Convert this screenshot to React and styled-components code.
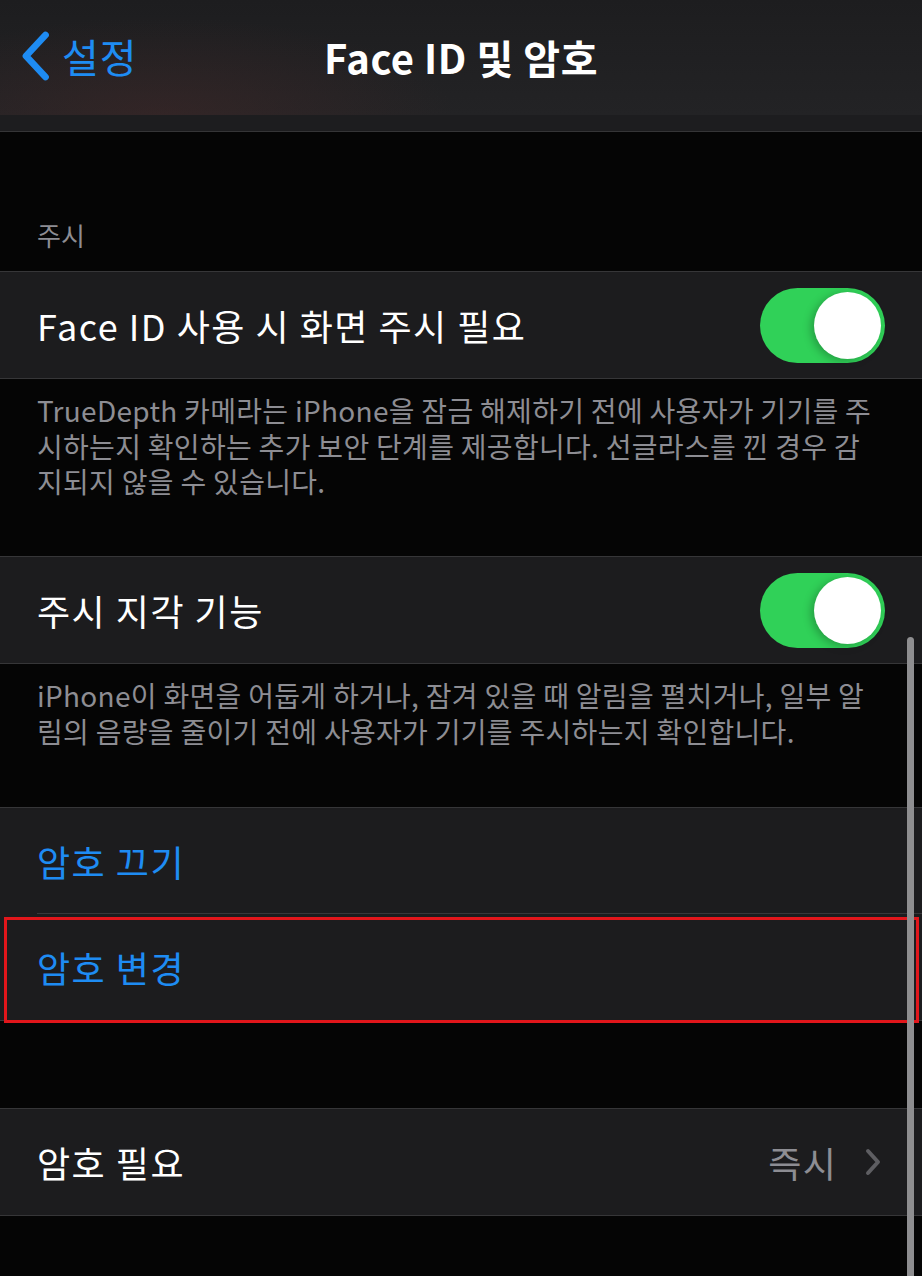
import React from "react";
import styled, { createGlobalStyle } from "styled-components";

const Global = createGlobalStyle`
  html, body { margin: 0; padding: 0; background: #050505; }
  body { font-family: "Noto Sans CJK KR", "Noto Sans", sans-serif; }
`;

const Page = styled.div`
  position: relative;
  width: 922px;
  height: 1276px;
  overflow: hidden;
  background: #050505;
`;

const NavBar = styled.header`
  height: 115px;
  display: grid;
  grid-template-columns: 1fr auto 1fr;
  align-items: center;
  background:
    radial-gradient(ellipse 420px 140px at 160px 115px, rgba(70, 40, 40, 0.45), rgba(0,0,0,0) 70%),
    linear-gradient(#1d1d1f, #232325);
`;

const Back = styled.div`
  display: flex;
  align-items: center;
  gap: 12px;
  padding-left: 20px;
  color: #1e8cf3;
  font-size: 40px;
  line-height: 1;
  letter-spacing: 1px;
  padding-bottom: 4px;
`;

const Title = styled.h1`
  margin: 0;
  color: #ffffff;
  font-size: 40px;
  font-weight: 700;
  letter-spacing: 0.5px;
  padding-bottom: 2px;
`;

const Strip = styled.div`
  height: 16px;
  background: #1d1d1f;
  border-bottom: 1px solid #353537;
`;

const Spacer = styled.div`
  height: ${p => p.h}px;
`;

const SectionHeader = styled.div`
  height: ${p => p.h}px;
  display: flex;
  align-items: flex-end;
  padding: 0 0 18px 37px;
  box-sizing: border-box;
  color: #8d8d93;
  font-size: 26px;
`;

const Group = styled.section`
  background: #1c1c1e;
  border-top: 1px solid #363638;
  border-bottom: 1px solid #363638;
`;

const Row = styled.div`
  position: relative;
  height: 106px;
  display: flex;
  align-items: center;
  justify-content: space-between;
  padding: 0 37px;
  box-sizing: border-box;
  ${p => p.divider && `
    &::before {
      content: "";
      position: absolute;
      left: 37px; right: 0; top: -1px;
      height: 1px;
      background: #38383a;
    }
  `}
  ${p => p.highlight && `
    &::after {
      content: "";
      position: absolute;
      left: 4px; right: 3px; top: 3px; bottom: -3px;
      border: 3px solid #e1161b;
      pointer-events: none;
    }
  `}
`;

const Label = styled.span`
  font-size: 36px;
  color: ${p => (p.link ? "#1e8cf3" : "#ffffff")};
  letter-spacing: 1.5px;
`;

const Value = styled.span`
  display: flex;
  align-items: center;
  gap: 28px;
  color: #8d8d93;
  font-size: 36px;
  letter-spacing: 1.2px;
  margin-right: 4px;
`;

const Toggle = styled.div`
  width: 125px;
  height: 75px;
  border-radius: 38px;
  background: #30d158;
  display: flex;
  align-items: center;
  justify-content: flex-end;
  padding: 4px;
  box-sizing: border-box;
`;

const Knob = styled.div`
  width: 67px;
  height: 67px;
  border-radius: 50%;
  background: #ffffff;
  box-shadow: -3px 2px 8px rgba(0, 0, 0, 0.25);
`;

const Footer = styled.p`
  margin: 0;
  height: ${p => p.h}px;
  padding: 14px 37px 0;
  box-sizing: border-box;
  color: #8d8d93;
  font-size: 28px;
  line-height: 35.5px;
  letter-spacing: 0.3px;
  white-space: nowrap;
`;

const ScrollIndicator = styled.div`
  position: absolute;
  left: 907px;
  top: 637px;
  width: 7px;
  bottom: -10px;
  border-radius: 4px;
  background: #8e8e90;
`;

const Chevron = ({ color, w, h, stroke }) => (
  <svg width={w} height={h} viewBox="0 0 20 34" fill="none">
    <path d="M17 3 L4 17 L17 31" stroke={color} strokeWidth={stroke} strokeLinecap="round" strokeLinejoin="round" />
  </svg>
);

const Disclosure = () => (
  <svg width="16" height="28" viewBox="0 0 16 28" fill="none">
    <path d="M3 3 L13 14 L3 25" stroke="#5e5e62" strokeWidth="4" strokeLinecap="round" strokeLinejoin="round" />
  </svg>
);

export default function App() {
  return (
    <Page>
      <Global />
      <NavBar>
        <Back>
          <Chevron color="#1e8cf3" w={30} h={52} stroke={4.5} />
          <span>설정</span>
        </Back>
        <Title>Face ID 및 암호</Title>
        <div />
      </NavBar>
      <Strip />
      <SectionHeader h={139}>주시</SectionHeader>
      <Group>
        <Row>
          <Label>Face ID 사용 시 화면 주시 필요</Label>
          <Toggle><Knob /></Toggle>
        </Row>
      </Group>
      <Footer h={177}>
        TrueDepth 카메라는 iPhone을 잠금 해제하기 전에 사용자가 기기를 주<br />
        시하는지 확인하는 추가 보안 단계를 제공합니다. 선글라스를 낀 경우 감<br />
        지되지 않을 수 있습니다.
      </Footer>
      <Group>
        <Row>
          <Label>주시 지각 기능</Label>
          <Toggle><Knob /></Toggle>
        </Row>
      </Group>
      <Footer h={143}>
        iPhone이 화면을 어둡게 하거나, 잠겨 있을 때 알림을 펼치거나, 일부 알<br />
        림의 음량을 줄이기 전에 사용자가 기기를 주시하는지 확인합니다.
      </Footer>
      <Group>
        <Row>
          <Label link>암호 끄기</Label>
        </Row>
        <Row divider highlight>
          <Label link>암호 변경</Label>
        </Row>
      </Group>
      <Spacer h={87} />
      <Group>
        <Row>
          <Label>암호 필요</Label>
          <Value>
            즉시
            <Disclosure />
          </Value>
        </Row>
      </Group>
      <ScrollIndicator />
    </Page>
  );
}
